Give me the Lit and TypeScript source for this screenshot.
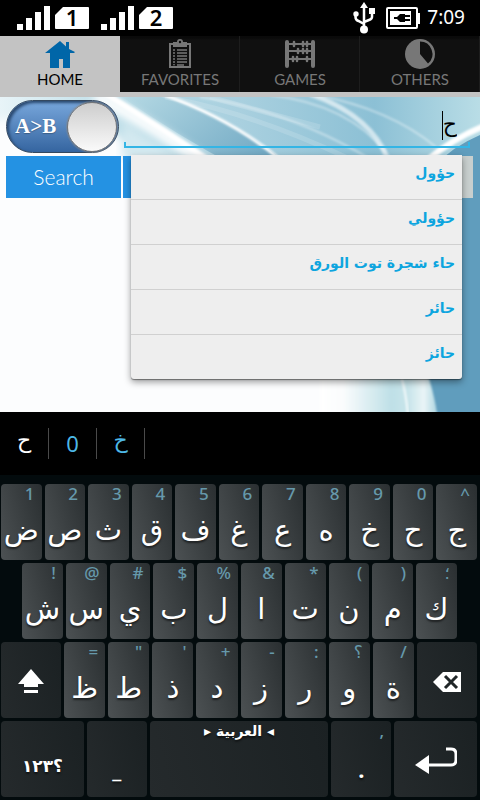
import { LitElement, html, svg, css } from "lit";
import { customElement, property, state } from "lit/decorators.js";
import { classMap } from "lit/directives/class-map.js";

type Key = { label: string; hint?: string };

const ROW_ONE: Key[] = [
  { label: "ض", hint: "1" }, { label: "ص", hint: "2" }, { label: "ث", hint: "3" },
  { label: "ق", hint: "4" }, { label: "ف", hint: "5" }, { label: "غ", hint: "6" },
  { label: "ع", hint: "7" }, { label: "ه", hint: "8" }, { label: "خ", hint: "9" },
  { label: "ح", hint: "0" }, { label: "ج", hint: "^" },
];
const ROW_TWO: Key[] = [
  { label: "ش", hint: "!" }, { label: "س", hint: "@" }, { label: "ي", hint: "#" },
  { label: "ب", hint: "$" }, { label: "ل", hint: "%" }, { label: "ا", hint: "&" },
  { label: "ت", hint: "*" }, { label: "ن", hint: "(" }, { label: "م", hint: ")" },
  { label: "ك", hint: "؛" },
];
const ROW_THREE: Key[] = [
  { label: "ظ", hint: "=" }, { label: "ط", hint: "\"" }, { label: "ذ", hint: "'" },
  { label: "د", hint: "+" }, { label: "ز", hint: "-" }, { label: "ر", hint: ":" },
  { label: "و", hint: "؟" }, { label: "ة", hint: "/" },
];

@customElement("status-bar")
export class StatusBar extends LitElement {
  static styles = css`
    :host { display: flex; align-items: center; height: 36px; padding: 0 15px 0 17px; background: #000; color: #fff; }
    .signal { display: block; margin-right: 12px; }
    .sim { font: 600 22px "Noto Sans", sans-serif; }
    .spacer { flex: 1; }
    .usb { margin-right: 11px; }
    .battery { margin-right: 6px; }
    .time { font: 19px/34px "Noto Sans", sans-serif; height: 36px; }
    svg { flex: none; display: block; }
  `;
  private signal(n: string) {
    return html`<svg class="signal" width="72" height="36" viewBox="0 -5 72 36" role="img" aria-label="SIM ${n} signal">
      <path fill="#fff" d="M0 19h6v6H0zM9 13h6v12H9zM18 7h6v18h-6zM27 1h6v24h-6zM38 10l8-8h25q1 0 1 1v20q0 1-1 1H39q-1 0-1-1z"/>
      <text class="sim" x="55" y="21" text-anchor="middle">${n}</text>
    </svg>`;
  }
  render() {
    return html`${this.signal("1")}${this.signal("2")}
      <span class="spacer"></span>
      <svg class="usb" width="22" height="32" viewBox="0 0 22 32" fill="none" stroke="#fff" stroke-width="2">
        <path d="M11 4v24M2.500 12v3q0 3 3 4l5.500 3M19 9v6q0 2-3 3l-5 2" stroke-width="2.500"/>
        <path d="M11 0l4 6H7z" fill="#fff" stroke="none"/>
        <circle cx="3" cy="12" r="2.700" fill="#fff" stroke="none"/>
        <path d="M16 6h6v6h-6z" fill="#fff" stroke="none"/>
        <circle cx="11" cy="27.500" r="4" fill="#fff" stroke="none"/>
      </svg>
      <svg class="battery" width="35" height="22" viewBox="0 0 35 22">
        <rect x="1" y="1" width="30" height="20" rx="1" fill="none" stroke="#fff" stroke-width="2"/>
        <path fill="#fff" d="M31 6h3v11h-3zM4 4h21v14H4z"/>
        <path d="M8 10h3l3-3h5v8h-5l-3-3H8zM19 8h5v2h-5zM19 12h5v2h-5z" fill="#000"/>
      </svg>
      <time class="time">7:09</time>`;
  }
}

@customElement("tab-bar")
export class TabBar extends LitElement {
  @property() active = "HOME";
  static styles = css`
    :host { display: block; background: #c3c3c3; padding-bottom: 5px; }
    .tabs { display: flex; }
    .tab { flex: 1; height: 56px; padding: 4px 0 0; margin: 0; border: 0; box-sizing: border-box; display: flex;
      flex-direction: column; align-items: center; gap: 1px; background: linear-gradient(#0a0a0a 0 2px, #101010 4px);
      box-shadow: inset -1px 0 #1d1d1d; color: #777; font: 15px/18px "Lato", sans-serif; }
    .active { background: #c3c3c3; color: #000; box-shadow: none; }
    svg { display: block; flex: none; }
  `;
  private icons: Record<string, unknown> = {
    HOME: svg`<path fill="#0066a8" d="M15 1l6 5.500V2h3v7l6 3-1 1h-4v15h-7v-9h-4v9H5V13H0z"/>`,
    FAVORITES: svg`<path fill="none" stroke="#777" stroke-width="2" d="M5 4h20v23H5z"/><path fill="#777" d="M8 7V2h4q0-3 3-3t3 3h4v5z"/><circle cx="15" cy="2" r="1.200" fill="#101010"/><path stroke="#777" stroke-width="1.500" d="M12 10h10M12 13h10M12 16h10M12 19h10M12 22h10M12 25h7"/><path stroke="#777" stroke-width="2" stroke-dasharray="1.500 1.500" d="M9 9.250v16"/>`,
    GAMES: svg`<g fill="none" stroke="#777"><path stroke-width="4" stroke-linecap="round" d="M2 2v24M28 2v24"/><path stroke-width="2" d="M3 4h24M3 11h24M3 19h24"/><path stroke-width="2.500" stroke-linecap="round" d="M9 2v4M18 2v4M22 2v4M13 9v4M18 9v4M22 9v4M8 17v4M12 17v4M22 17v4"/></g>`,
    OTHERS: svg`<circle cx="15" cy="14" r="15" fill="#777"/><path fill="#101010" d="M15 1.500A12.500 12.500 0 0 1 23 23.500L15 14z"/>`,
  };
  render() {
    return html`<nav class="tabs">${Object.keys(this.icons).map((name) => html`
      <button class=${classMap({ tab: true, active: name === this.active })} @click=${() => (this.active = name)}>
        <svg width="30" height="29" viewBox="0 0 30 29" overflow="visible">${this.icons[name]}</svg>${name}
      </button>`)}</nav>`;
  }
}

@customElement("search-panel")
export class SearchPanel extends LitElement {
  @state() private words = ["حؤول", "حؤولي", "حاء شجرة توت الورق", "حائر", "حائز"];
  static styles = css`
    :host { display: block; position: relative; height: 315px; background: #fff; }
    .wave { position: absolute; inset: 0; width: 100%; height: 100%; }
    .form { position: relative; padding: 3px 7px 0 6px; }
    .top { display: flex; gap: 5px; }
    .switch { position: relative; flex: none; display: flex; align-items: center; justify-content: space-between;
      width: 113px; height: 53px; box-sizing: border-box; padding: 0 1px 0 8px; border-radius: 27px;
      border: 1px solid #34485f; background: linear-gradient(#78a7dc, #3565a0); box-shadow: inset 2px 2px 3px #29486f;
      color: #fff; font: 700 21px/53px "Liberation Serif", serif; text-shadow: 0 1px 1px #2346; }
    .check { position: absolute; inset: 0; width: 100%; height: 100%; margin: 0; opacity: 0; }
    .knob { width: 50px; height: 50px; box-sizing: border-box; border: 1px solid #777; border-radius: 50%;
      background: linear-gradient(#cdcdcd, #fafafa); box-shadow: 0 0 1px 1px #8888; }
    .field { position: relative; flex: 1; display: flex; flex-direction: column; padding-right: 3px; height: 48px; }
    .input { flex: 1; min-width: 0; min-height: 0; width: 100%; box-sizing: border-box; padding: 8px 13px 0; border: 0;
      background: none; outline: 0; direction: rtl; color: #000; font: 22px/32px "DejaVu Sans", sans-serif; }
    .line { height: 6px; box-sizing: border-box; border: 2px solid #33b5e5; border-top: 0; }
    .caret { position: absolute; top: 11px; right: 30px; width: 1px; height: 29px; background: #000; }
    .actions { display: flex; gap: 2px; padding-top: 3px; }
    .action { flex: 1; height: 42px; padding: 0; border: 0; background: #2492e3; color: #fff;
      font: 300 21px/42px "Lato", sans-serif; }
    .muted { background: #c8cfce; }
    .list { position: absolute; top: 58px; left: 131px; right: 18px; margin: 0; padding: 0; list-style: none;
      background: #eee; border-radius: 0 0 3px 3px; box-shadow: 0 3px 7px #0006, 0 1px 1px #0006; }
    .item + .item { border-top: 1px solid #d0d0d0; }
    .word { display: block; width: 100%; height: 44px; padding: 0 7px 8px; border: 0; background: none; direction: rtl;
      text-align: right; color: #0da5df; font: 700 14px/36px "DejaVu Sans", sans-serif; }
  `;
  render() {
    return html`
      <svg class="wave" viewBox="0 0 480 315" preserveAspectRatio="none" aria-hidden="true">
        <defs>
          <linearGradient id="sky" x1="0" y1="0" x2="1" y2="0"><stop offset="0" stop-color="#e8f4f8"/><stop offset=".3" stop-color="#b3d8e4"/><stop offset=".5" stop-color="#a9d0df"/><stop offset=".78" stop-color="#8cc0d5"/><stop offset="1" stop-color="#b9dde6"/></linearGradient>
          <linearGradient id="band" x1="0" y1="0" x2="1" y2=".5"><stop offset="0" stop-color="#b5d9e4"/><stop offset="1" stop-color="#74abc5"/></linearGradient>
          <linearGradient id="low" x1="0" y1="0" x2="1" y2="0"><stop offset="0" stop-color="#fff"/><stop offset=".2" stop-color="#fafcfd"/><stop offset=".6" stop-color="#bfe0e7"/><stop offset=".75" stop-color="#c8e4ea"/><stop offset=".88" stop-color="#eaf5f7"/><stop offset="1" stop-color="#a9d3df"/></linearGradient>
          <filter id="soft"><feGaussianBlur stdDeviation="4"/></filter>
          <filter id="fine"><feGaussianBlur stdDeviation="1"/></filter>
        </defs>
        <path fill="url(#sky)" d="M0 0h480v315H0z"/>
        <path fill="#fcfdfe" filter="url(#soft)" d="M-20 25L75 15Q130 50 200 72L400 120V335H-20z"/>
        <path fill="#d3e9f0" filter="url(#soft)" d="M122 25L180 62H122z"/>
        <path fill="url(#band)" d="M164 0Q240 25 290 69H235Q180 40 122 0z"/>
        <path stroke="#fff" stroke-width="12" fill="none" filter="url(#soft)" d="M95-2Q160 34 212 72"/>
        <path stroke="#fff" stroke-width="6" fill="none" filter="url(#fine)" d="M104-4Q160 30 212 66"/>
        <path stroke="#fff" stroke-width="3" fill="none" filter="url(#fine)" d="M162-3Q232 22 282 64"/>
        <path stroke="#fff" stroke-opacity=".6" stroke-width="5" fill="none" filter="url(#fine)" d="M310-3Q370 18 388 62"/>
        <path stroke="#fff" stroke-opacity=".4" stroke-width="2" fill="none" filter="url(#fine)" d="M316-2Q390 12 436 50M270-2Q350 8 386 56M200 0Q290 14 370 62"/>
        <path stroke="#fff" stroke-opacity=".15" stroke-width="5" fill="none" d="M165 0Q250 15 350 62M210 0Q260 14 320 30"/>
        <path fill="#609dbd" d="M480 38Q452 50 436 68V270h44z"/>
        <path stroke="#fff" stroke-width="6" fill="none" filter="url(#fine)" d="M426 64Q452 42 484 29"/>
        <path fill="#609dbd" d="M420 270h60v45h-60z"/>
        <path fill="url(#low)" filter="url(#fine)" d="M320 260H420q12 22 18 62H320z"/>
        <path stroke="#fff" stroke-opacity=".8" stroke-width="2" fill="none" filter="url(#fine)" d="M401 278q5 18 7 40"/>
      </svg>
      <div class="form">
        <div class="top">
          <label class="switch"><input class="check" type="checkbox" checked />A&gt;B<span class="knob"></span></label>
          <div class="field">
            <input class="input" type="text" aria-label="Search word" .value=${"ح"} />
            <span class="caret"></span><span class="line"></span>
          </div>
        </div>
        <div class="actions">
          <button class="action">Search</button>
          <button class="action"></button><button class="action"></button>
          <button class="action muted"></button>
        </div>
      </div>
      <ul class="list">${this.words.map((w) => html`<li class="item"><button class="word">${w}</button></li>`)}</ul>`;
  }
}

@customElement("key-board")
export class KeyBoard extends LitElement {
  static styles = css`
    :host { display: block; background: #030b0d; color: #fff; }
    .suggestions { display: flex; height: 63px; align-items: center; background: #000; }
    .suggest { width: 48px; height: 31px; padding: 0; border: 0; border-right: 1px solid #4a4a4a; background: none;
      color: #4db8e6; font: 22px/31px "Noto Sans", "DejaVu Sans", sans-serif; }
    .arabic { padding-bottom: 8px; line-height: 23px; }
    .typed { width: 49px; color: #fff; }
    .rows { display: flex; flex-direction: column; gap: 3px; padding: 9px 3px 3px 1px; }
    .row { display: flex; gap: 3px; }
    .inset { padding: 0 20px 0 21px; }
    .key { position: relative; flex: 41 1 0; min-width: 0; height: 76px; padding: 16px 0 0; border: 0; border-radius: 4px;
      background: linear-gradient(75deg, #4c5153, #3b4042 50%, #2a2f31); color: #fff; text-align: center;
      display: flex; align-items: center; justify-content: center; text-shadow: 0 2px 2px #0008;
      font: 29px/40px "DejaVu Sans", sans-serif; }
    .hint { position: absolute; top: 0; right: 7px; color: #6699ab; text-shadow: none;
      font: 500 17px/20px "Noto Sans", "DejaVu Sans", sans-serif; }
    .dark { background: linear-gradient(75deg, #252a2c, #1b2123); }
    .side { flex-grow: 60; padding: 4px 0 0; }
    .wide { flex-grow: 83; padding: 4px 0 0; }
    .space { flex-grow: 179; align-items: flex-start; padding: 0; font: 700 14px/20px "DejaVu Sans", sans-serif; }
    .digits { padding-top: 14px; font: 700 17px/24px "DejaVu Sans", sans-serif; }
    .mark { font: 700 22px/40px "Noto Sans", sans-serif; }
    .stop { padding-top: 20px; }
    svg { display: block; }
  `;
  private keys(keys: Key[]) {
    return keys.map((k) => html`<button class="key">${k.label}<span class="hint">${k.hint}</span></button>`);
  }
  render() {
    return html`
      <div class="suggestions">
        <button class="suggest arabic typed">ح</button><button class="suggest">0</button><button class="suggest arabic">خ</button>
      </div>
      <div class="rows">
        <div class="row">${this.keys(ROW_ONE)}</div>
        <div class="row inset">${this.keys(ROW_TWO)}</div>
        <div class="row">
          <button class="key dark side" aria-label="Shift"><svg width="26" height="26" viewBox="0 0 26 26" fill="#fff"><path d="M13 0l13 15h-6v3H6v-3H0zM6 21h14v3H6z"/></svg></button>
          ${this.keys(ROW_THREE)}
          <button class="key dark side" aria-label="Backspace"><svg width="28" height="20" viewBox="0 0 28 20"><path fill="#fff" d="M0 10L10 0h18v20H10z"/><path stroke="#202628" stroke-width="3" d="M12 4l12 12M24 4L12 16"/></svg></button>
        </div>
        <div class="row">
          <button class="key dark wide digits">؟١٢٣</button>
          <button class="key dark side mark stop">_</button>
          <button class="key dark space" dir="rtl">◂ العربية ▸</button>
          <button class="key dark side mark stop">.<span class="hint">,</span></button>
          <button class="key dark wide" aria-label="Enter"><svg width="42" height="28" viewBox="0 0 42 28"><path fill="none" stroke="#fff" stroke-width="3" d="M31 2h5q5 0 5 5v6q0 5-5 5H12"/><path fill="#fff" d="M0 18L14 8v19z"/></svg></button>
        </div>
      </div>`;
  }
}

@customElement("app-root")
export class AppRoot extends LitElement {
  static styles = css`:host { display: block; min-height: 100vh; background: #030b0d; overflow: hidden; }`;
  render() {
    return html`<status-bar></status-bar><tab-bar></tab-bar><search-panel></search-panel><key-board></key-board>`;
  }
}
